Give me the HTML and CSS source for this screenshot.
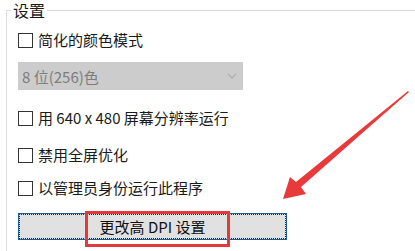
FILE: index.html
```html
<!DOCTYPE html>
<html lang="zh-CN">
<head>
<meta charset="utf-8">
<title>设置</title>
<link rel="stylesheet" href="styles.css">
</head>
<body>
<fieldset class="group">
  <legend class="group-title">设置</legend>
  <div class="group-body">
    <label class="row row-1"><span class="box"></span><span class="label">简化的颜色模式</span></label>
    <div class="select">
      <span class="select-text">8 位(256)色</span>
      <svg class="chevron" width="10" height="6" viewBox="0 0 10 6"><path d="M1 1 L5 5 L9 1" fill="none" stroke="#b0b0b0" stroke-width="1.4"/></svg>
    </div>
    <label class="row row-2"><span class="box"></span><span class="label">用 640 x 480 屏幕分辨率运行</span></label>
    <label class="row row-3"><span class="box"></span><span class="label">禁用全屏优化</span></label>
    <label class="row row-4"><span class="box"></span><span class="label">以管理员身份运行此程序</span></label>
    <div class="btn-wrap">
      <button class="btn">更改高 DPI 设置</button>
      <span class="highlight"></span>
    </div>
  </div>
</fieldset>
<svg class="arrow" width="415" height="251" viewBox="0 0 415 251">
  <polygon points="408,91 296,182 290,177 283,199 306,194 301,187 409,92" fill="#e8393b"/>
</svg>
</body>
</html>
```

FILE: styles.css
```css
html, body {
  margin: 0;
  padding: 0;
  background: #ffffff;
  overflow: hidden;
  width: 415px;
  height: 251px;
}
body {
  font-family: "Noto Sans CJK SC", "Noto Sans", sans-serif;
  font-size: 15px;
  color: #1a1a1a;
  position: relative;
}
.group {
  margin: 0 0 0 6px;
  padding: 0 0 0 4px;
  border: 1px solid #dcdcdc;
  border-right: none;
  border-bottom: none;
  min-height: 260px;
  box-sizing: border-box;
  width: 420px;
}
.group-title {
  padding: 0 2px;
  font-size: 16px;
  line-height: 20px;
  color: #1a1a1a;
}
.group-body {
  display: flex;
  flex-direction: column;
  padding-left: 7px;
}
.row {
  display: flex;
  align-items: center;
  height: 20px;
  line-height: 20px;
}
.row-1 { margin-top: 10px; }
.row-2 { margin-top: 18px; }
.row-3 { margin-top: 17px; }
.row-4 { margin-top: 13px; }
.box {
  width: 15px;
  height: 15px;
  box-sizing: border-box;
  border: 1px solid #333333;
  background: #ffffff;
  flex: none;
}
.label {
  margin-left: 5px;
  white-space: nowrap;
}
.select {
  margin-top: 12px;
  width: 225px;
  height: 28px;
  background: #cccccc;
  display: flex;
  align-items: center;
  padding-left: 4px;
  box-sizing: border-box;
}
.select-text {
  color: #7c7c7c;
}
.chevron {
  margin-left: auto;
  margin-right: 6px;
}
.btn-wrap {
  position: relative;
  margin-top: 15px;
  width: 269px;
  height: 27px;
}
.btn {
  width: 269px;
  height: 27px;
  box-sizing: border-box;
  border: 1px solid #1e5f96;
  outline: 1px dotted #1a2a3a;
  outline-offset: -2px;
  background: #e1e1e1;
  font-family: "Noto Sans CJK SC", "Noto Sans", sans-serif;
  font-size: 15px;
  color: #111111;
  padding: 0;
  line-height: 25px;
}
.highlight {
  position: absolute;
  left: 67px;
  top: -2px;
  width: 145px;
  height: 36px;
  box-sizing: border-box;
  border: 3px solid #e23a3c;
}
.arrow {
  position: absolute;
  left: 0;
  top: 0;
  pointer-events: none;
}
```
